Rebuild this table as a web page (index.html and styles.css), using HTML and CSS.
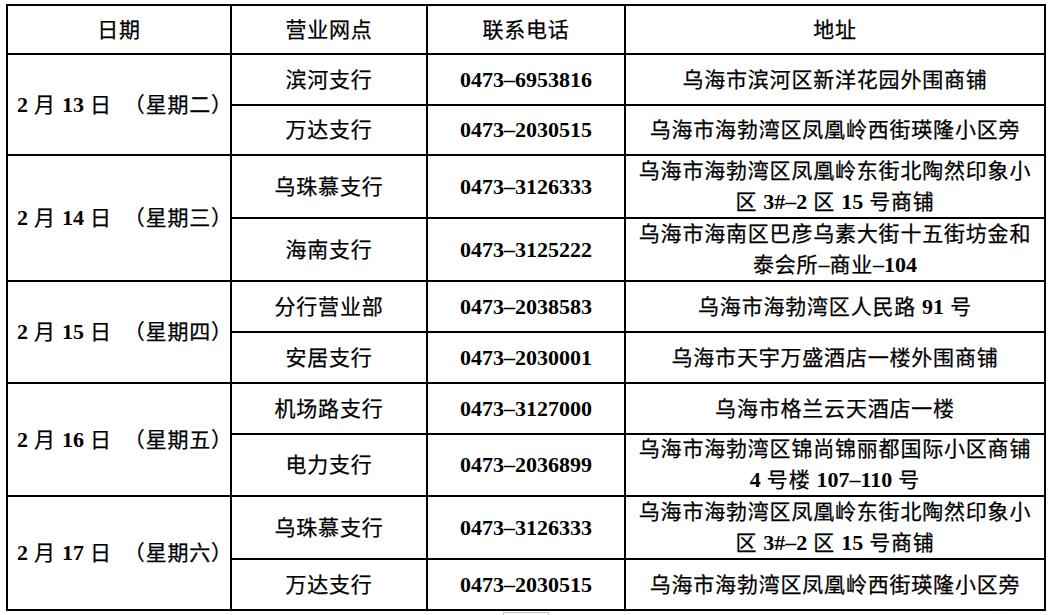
FILE: index.html
```html
<!DOCTYPE html>
<html lang="zh-CN">
<head>
<meta charset="utf-8">
<title>营业网点安排</title>
<link rel="stylesheet" href="styles.css">
</head>
<body>
<div class="page">
  <table class="sched">
    <colgroup>
      <col class="c-date">
      <col class="c-branch">
      <col class="c-phone">
      <col class="c-addr">
    </colgroup>
    <thead>
      <tr class="h-head">
        <th>日期</th>
        <th>营业网点</th>
        <th>联系电话</th>
        <th>地址</th>
      </tr>
    </thead>
    <tbody>
      <tr class="h-51">
        <td rowspan="2" class="date"><b class="n">2</b> 月 <b class="n">13</b> 日 &nbsp;（星期二）</td>
        <td>滨河支行</td>
        <td class="n">0473–6953816</td>
        <td>乌海市滨河区新洋花园外围商铺</td>
      </tr>
      <tr class="h-50">
        <td>万达支行</td>
        <td class="n">0473–2030515</td>
        <td>乌海市海勃湾区凤凰岭西街瑛隆小区旁</td>
      </tr>

      <tr class="h-63">
        <td rowspan="2" class="date"><b class="n">2</b> 月 <b class="n">14</b> 日 &nbsp;（星期三）</td>
        <td>乌珠慕支行</td>
        <td class="n">0473–3126333</td>
        <td class="two">乌海市海勃湾区凤凰岭东街北陶然印象小<br>区 <b class="n">3#–2</b> 区 <b class="n">15</b> 号商铺</td>
      </tr>
      <tr class="h-63">
        <td>海南支行</td>
        <td class="n">0473–3125222</td>
        <td class="two">乌海市海南区巴彦乌素大街十五街坊金和<br>泰会所<b class="n">–</b>商业<b class="n">–104</b></td>
      </tr>

      <tr class="h-51">
        <td rowspan="2" class="date"><b class="n">2</b> 月 <b class="n">15</b> 日 &nbsp;（星期四）</td>
        <td>分行营业部</td>
        <td class="n">0473–2038583</td>
        <td>乌海市海勃湾区人民路 <b class="n">91</b> 号</td>
      </tr>
      <tr class="h-51">
        <td>安居支行</td>
        <td class="n">0473–2030001</td>
        <td>乌海市天宇万盛酒店一楼外围商铺</td>
      </tr>

      <tr class="h-51">
        <td rowspan="2" class="date"><b class="n">2</b> 月 <b class="n">16</b> 日 &nbsp;（星期五）</td>
        <td>机场路支行</td>
        <td class="n">0473–3127000</td>
        <td>乌海市格兰云天酒店一楼</td>
      </tr>
      <tr class="h-61">
        <td>电力支行</td>
        <td class="n">0473–2036899</td>
        <td class="two snug">乌海市海勃湾区锦尚锦丽都国际小区商铺<br><b class="n">4</b> 号楼 <b class="n">107–110</b> 号</td>
      </tr>

      <tr class="h-63">
        <td rowspan="2" class="date"><b class="n">2</b> 月 <b class="n">17</b> 日 &nbsp;（星期六）</td>
        <td>乌珠慕支行</td>
        <td class="n">0473–3126333</td>
        <td class="two">乌海市海勃湾区凤凰岭东街北陶然印象小<br>区 <b class="n">3#–2</b> 区 <b class="n">15</b> 号商铺</td>
      </tr>
      <tr class="h-51">
        <td>万达支行</td>
        <td class="n">0473–2030515</td>
        <td>乌海市海勃湾区凤凰岭西街瑛隆小区旁</td>
      </tr>
    </tbody>
  </table>
  <div class="tab-mark"></div>
</div>
</body>
</html>
```

FILE: styles.css
```css
html, body {
  margin: 0;
  padding: 0;
  background: #ffffff;
}

.page {
  padding: 4px 0 0 6px;
  font-family: "Liberation Serif", "Noto Sans CJK SC", serif;
  font-size: 21px;
  color: #000000;
  -webkit-text-stroke: 0.25px #000;
}

.sched {
  width: 1040px;
  table-layout: fixed;
  border-collapse: separate;
  border-spacing: 0;
  border-top: 2px solid #000;
  border-left: 2px solid #000;
}

.c-date { width: 224px; }
.c-branch { width: 196px; }
.c-phone { width: 198px; }
.c-addr { width: 420px; }

.sched th,
.sched td {
  border-right: 2px solid #000;
  border-bottom: 2px solid #000;
  padding: 0;
  text-align: center;
  vertical-align: middle;
  font-weight: 400;
  letter-spacing: 0.8px;
  line-height: 30px;
  white-space: nowrap;
}

.h-head { height: 49px; }
.h-50 { height: 50px; }
.h-51 { height: 51px; }
.h-61 { height: 61px; }
.h-63 { height: 63px; }

.sched td.two { line-height: 30.5px; }
.sched td.two.snug { line-height: 29.5px; }

.n {
  font-family: "Liberation Serif", serif;
  font-weight: 700;
  font-size: 22px;
  letter-spacing: 0;
  -webkit-text-stroke: 0;
}

.sched td.n {
  font-weight: 700;
  letter-spacing: 0;
}

.sched td.date {
  padding-left: 9px;
  letter-spacing: 0.8px;
}

.tab-mark {
  margin: 1px 0 0 497px;
  width: 44px;
  height: 4px;
  border: 1px solid #c8c8c8;
  border-bottom: none;
  -webkit-text-stroke: 0;
}
```
